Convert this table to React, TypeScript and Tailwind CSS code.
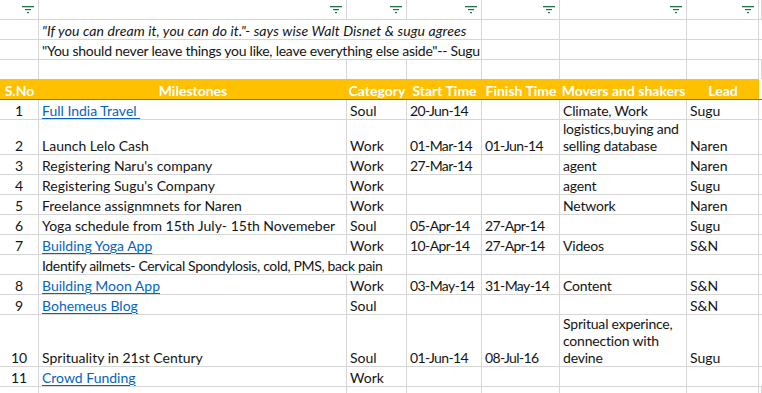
import React from "react";

const COLS = "grid grid-cols-[39px_308px_60px_75px_78px_127px_72px_1fr]";
const cellB = "border-r border-b border-[#d6d6d6] px-[3px] flex items-end whitespace-nowrap overflow-visible leading-[17px]";

function Filter() {
  return (
    <svg width="12" height="8" viewBox="0 0 12 8" className="block">
      <rect x="0" y="0" width="12" height="1.3" fill="#217346" />
      <rect x="3" y="3" width="6" height="1.2" fill="#217346" />
      <rect x="5" y="6" width="2" height="1.2" fill="#217346" />
    </svg>
  );
}

type Row = {
  n: string;
  m: string;
  link?: boolean;
  c: string;
  s: string;
  f: string;
  mv: string[];
  l: string;
  h: string;
};

const rows: Row[] = [
  { n: "1", m: "Full India Travel\u00a0", link: true, c: "Soul", s: "20-Jun-14", f: "", mv: ["Climate, Work"], l: "Sugu", h: "h-[20px]" },
  { n: "2", m: "Launch Lelo Cash", c: "Work", s: "01-Mar-14", f: "01-Jun-14", mv: ["logistics,buying and", "selling database"], l: "Naren", h: "h-[35px]" },
  { n: "3", m: "Registering Naru's company", c: "Work", s: "27-Mar-14", f: "", mv: ["agent"], l: "Naren", h: "h-[20px]" },
  { n: "4", m: "Registering Sugu's Company", c: "Work", s: "", f: "", mv: ["agent"], l: "Sugu", h: "h-[20px]" },
  { n: "5", m: "Freelance assignmnets for Naren", c: "Work", s: "", f: "", mv: ["Network"], l: "Naren", h: "h-[20px]" },
  { n: "6", m: "Yoga schedule from 15th July- 15th Novemeber", c: "Soul", s: "05-Apr-14", f: "27-Apr-14", mv: [""], l: "Sugu", h: "h-[20px]" },
  { n: "7", m: "Building Yoga App", link: true, c: "Work", s: "10-Apr-14", f: "27-Apr-14", mv: ["Videos"], l: "S&N", h: "h-[20px]" },
];

const rows2: Row[] = [
  { n: "8", m: "Building Moon App", link: true, c: "Work", s: "03-May-14", f: "31-May-14", mv: ["Content"], l: "S&N", h: "h-[20px]" },
  { n: "9", m: "Bohemeus Blog", link: true, c: "Soul", s: "", f: "", mv: [""], l: "S&N", h: "h-[20px]" },
  { n: "10", m: "Sprituality in 21st Century", c: "Soul", s: "01-Jun-14", f: "08-Jul-16", mv: ["Spritual experince,", "connection with", "devine"], l: "Sugu", h: "h-[52px]" },
  { n: "11", m: "Crowd Funding", link: true, c: "Work", s: "", f: "", mv: [""], l: "", h: "h-[20px]" },
];

function DataRow({ r }: { r: Row }) {
  return (
    <div className={`${COLS} ${r.h}`}>
      <div className={`${cellB} justify-center`}>{r.n}</div>
      <div className={cellB}>
        {r.link ? <span className="text-[#0563c1] underline underline-offset-[2px]">{r.m}</span> : r.m}
      </div>
      <div className={cellB}>{r.c}</div>
      <div className={`${cellB} tracking-[-0.6px]`}>{r.s}</div>
      <div className={`${cellB} tracking-[-0.6px]`}>{r.f}</div>
      <div className={`${cellB} tracking-[-0.2px]`}>
        <div className="flex flex-col">
          {r.mv.map((t, i) => (
            <span key={i}>{t}</span>
          ))}
        </div>
      </div>
      <div className={cellB}>{r.l}</div>
      <div className={cellB}></div>
    </div>
  );
}

export default function App() {
  const hdr = "flex items-end justify-center leading-[17px] font-bold text-white bg-[#ffc000] whitespace-nowrap";
  return (
    <div
      className="w-[762px] h-[393px] overflow-hidden bg-white text-[14px] text-[#141414]"
      style={{ fontFamily: "Lato, 'Open Sans', sans-serif" }}
    >
      {/* filter row */}
      <div className={`${COLS} h-[20px]`}>
        {[0, 1, 2, 3, 4, 5, 6].map((i) => (
          <div key={i} className="border-r border-b border-[#d6d6d6] flex justify-end pr-[4px] pt-[6px]">
            <Filter />
          </div>
        ))}
        <div className="border-r border-b border-[#d6d6d6]"></div>
      </div>
      {/* quote rows */}
      <div className={`${COLS} h-[20px]`}>
        <div className={cellB}></div>
        <div className={`${cellB} col-span-3 italic tracking-[0.1px]`}>
          "If you can dream it, you can do it."- says wise Walt Disnet &amp; sugu agrees
        </div>
        <div className={cellB}></div>
        <div className={cellB}></div>
        <div className={cellB}></div>
        <div className={cellB}></div>
      </div>
      <div className={`${COLS} h-[20px]`}>
        <div className={cellB}></div>
        <div className={`${cellB} col-span-3 tracking-[-0.25px]`}>
          "You should never leave things you like, leave everything else aside"-- Sugu
        </div>
        <div className={cellB}></div>
        <div className={cellB}></div>
        <div className={cellB}></div>
        <div className={cellB}></div>
      </div>
      <div className={`${COLS} h-[19px]`}>
        {[0, 1, 2, 3, 4, 5, 6, 7].map((i) => (
          <div key={i} className="border-r border-[#d6d6d6]"></div>
        ))}
      </div>
      {/* header */}
      <div className={`${COLS} h-[21px] border-b border-[#22a34b]`}>
        <div className={hdr}>S.No</div>
        <div className={hdr}>Milestones</div>
        <div className={hdr}>Category</div>
        <div className={hdr}>Start Time</div>
        <div className={hdr}>Finish Time</div>
        <div className={hdr}>Movers and shakers</div>
        <div className={hdr}>Lead</div>
        <div className="bg-white"></div>
      </div>
      {rows.map((r) => (
        <DataRow key={r.n} r={r} />
      ))}
      <div className={`${COLS} h-[20px]`}>
        <div className={cellB}></div>
        <div className={`${cellB} col-span-2 tracking-[-0.35px]`}>Identify ailmets- Cervical Spondylosis, cold, PMS, back pain</div>
        <div className={cellB}></div>
        <div className={cellB}></div>
        <div className={cellB}></div>
        <div className={cellB}></div>
        <div className={cellB}></div>
      </div>
      {rows2.map((r) => (
        <DataRow key={r.n} r={r} />
      ))}
      <div className={`${COLS} h-[20px]`}>
        {[0, 1, 2, 3, 4, 5, 6, 7].map((i) => (
          <div key={i} className="border-r border-b border-[#d6d6d6]"></div>
        ))}
      </div>
    </div>
  );
}
